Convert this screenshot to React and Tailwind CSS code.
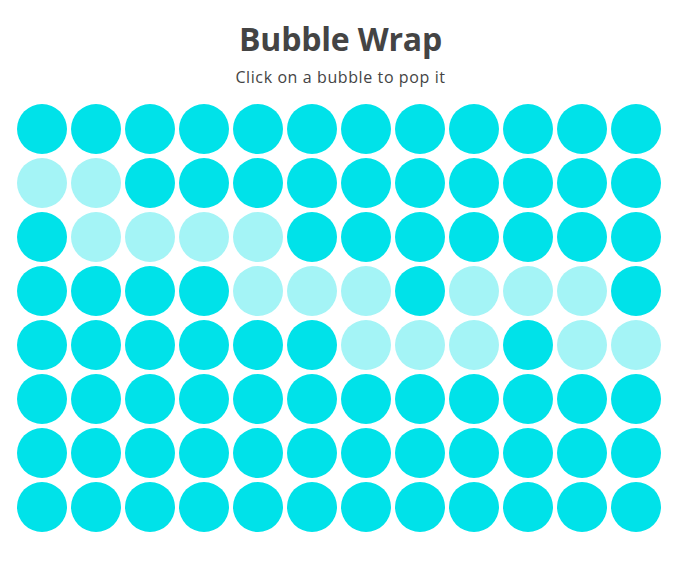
import { useState } from "react";

const ROWS = 8;
const COLS = 12;

// bubbles already popped in the screenshot, as "row-col" (1-based)
const initialPopped = [
  "2-1", "2-2",
  "3-2", "3-3", "3-4", "3-5",
  "4-5", "4-6", "4-7", "4-9", "4-10", "4-11",
  "5-7", "5-8", "5-9", "5-11", "5-12",
];

function Bubble({ popped, onClick }) {
  return (
    <button
      onClick={onClick}
      className={`w-[50px] h-[50px] rounded-full ${popped ? "bg-[#a4f4f6]" : "bg-[#00e2e9]"}`}
    />
  );
}

export default function App() {
  const [popped, setPopped] = useState(new Set(initialPopped));

  const handlePop = (key) => {
    const next = new Set(popped);
    next.add(key);
    setPopped(next);
  };

  const cells = [];
  for (let r = 1; r <= ROWS; r++) {
    for (let c = 1; c <= COLS; c++) {
      const key = `${r}-${c}`;
      cells.push(<Bubble key={key} popped={popped.has(key)} onClick={() => handlePop(key)} />);
    }
  }

  return (
    <div className="min-h-screen bg-white font-['Open_Sans',sans-serif] text-[#444]">
      <h1 className="pt-[19px] text-center text-[32px] leading-[40px] font-bold tracking-[-0.2px]">
        Bubble Wrap
      </h1>
      <p className="mt-[8px] text-center text-[16px] leading-[20px] tracking-[0.6px]">
        Click on a bubble to pop it
      </p>
      <div className="mt-[17px] pl-[17px] grid grid-cols-[repeat(12,50px)] gap-[4px]">{cells}</div>
    </div>
  );
}
